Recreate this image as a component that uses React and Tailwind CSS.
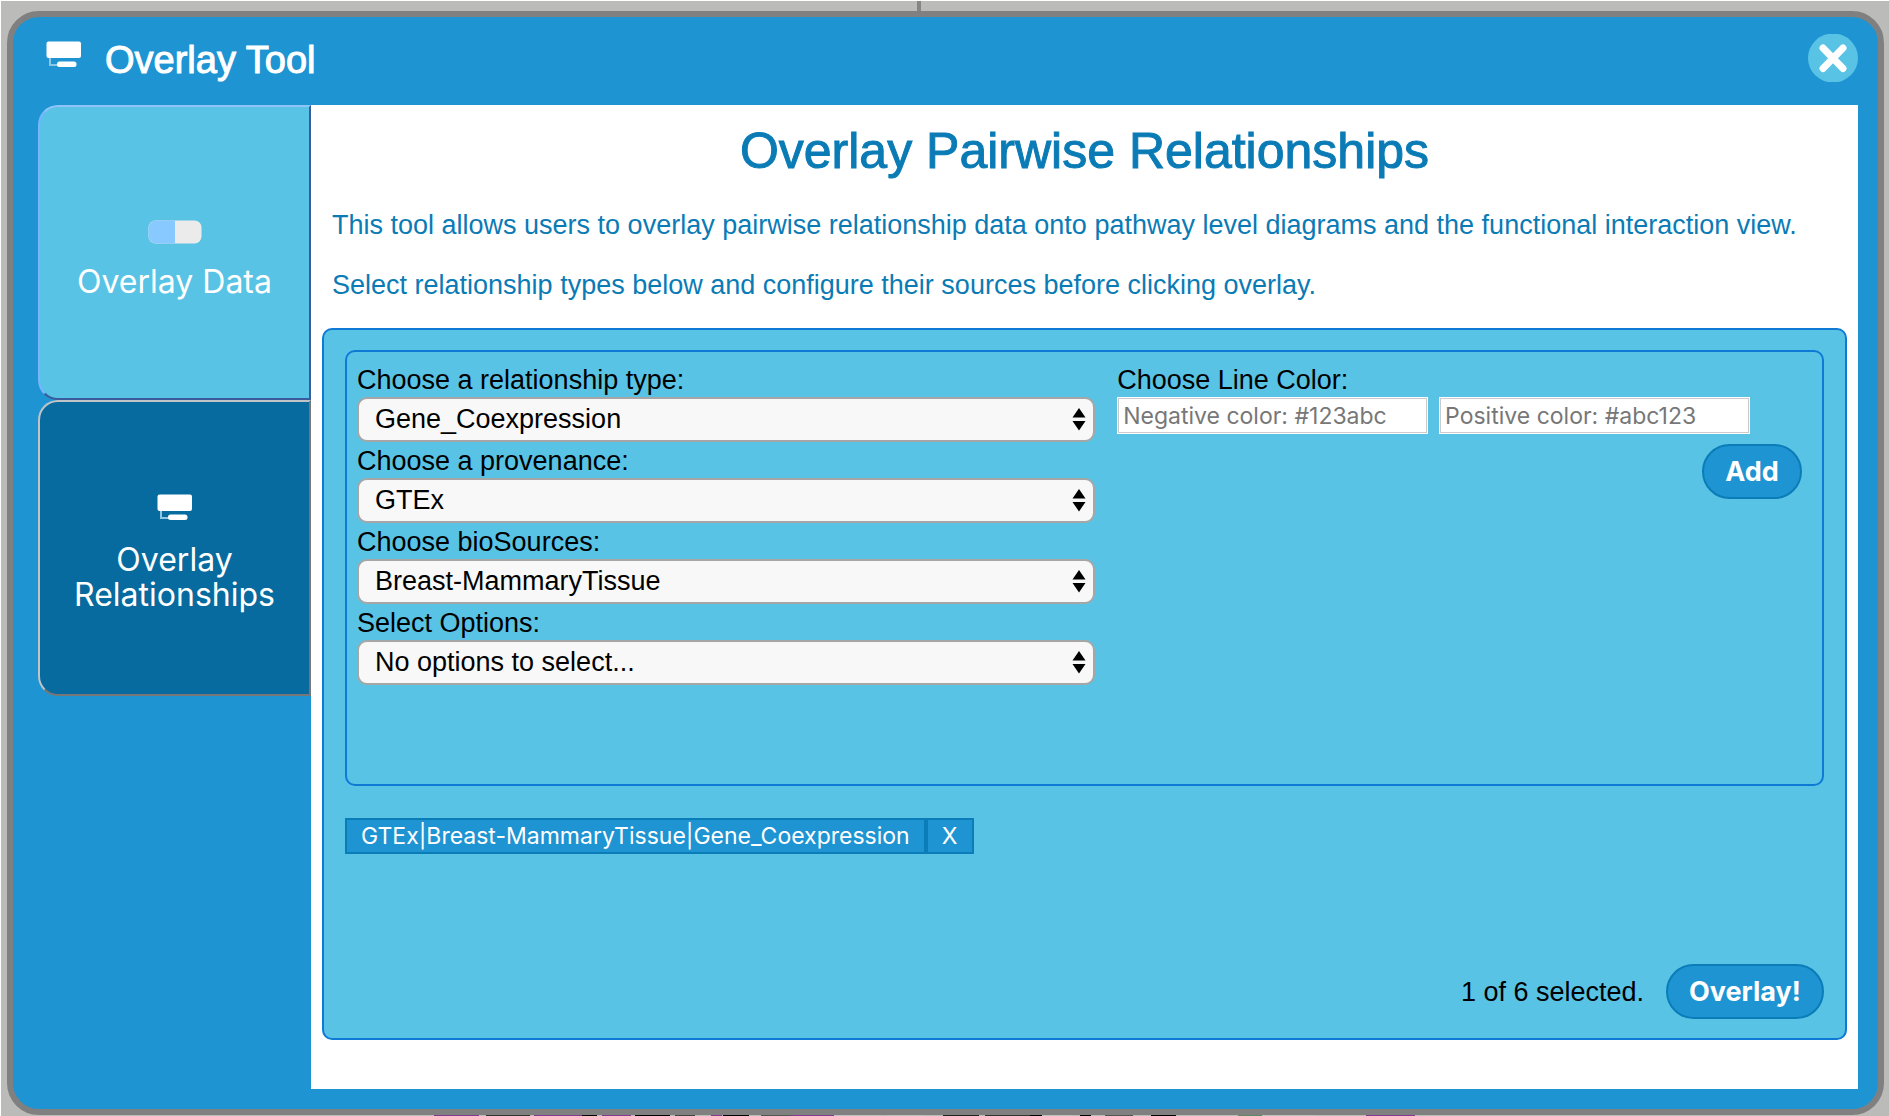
function CardIcon() {
  return (
    <svg className="h-7 w-9 shrink-0" viewBox="0 0 36 28" fill="none" aria-hidden="true">
      <path d="M4 17v7h8" stroke="#8fc6e4" strokeWidth="2" />
      <rect x="0.500" y="0.500" width="34.500" height="16.500" rx="2" fill="#fff" />
      <rect x="11" y="20.500" width="19.500" height="5.500" rx="2.500" fill="#fff" />
    </svg>
  );
}

function PillIcon() {
  return (
    <svg className="h-6 w-[54px]" viewBox="0 0 54 24" aria-hidden="true">
      <rect x="0.500" y="0.500" width="53" height="23" rx="7" fill="#ebebeb" />
      <path d="M27 0.500H8A7.500 7.500 0 0 0 0.500 8v8A7.500 7.500 0 0 0 8 23.500h19z" fill="#88caff" />
    </svg>
  );
}

function SelectField({ id, label, value }) {
  return (
    <div className="pb-px">
      <label htmlFor={id} className="block h-[35px] text-[27px] leading-9">{label}</label>
      <div className="relative">
        <select
          id={id}
          defaultValue={value}
          className="block h-[45px] w-full appearance-none rounded-[10px] border-2 border-[#a6a6a6] bg-[#f8f8f8] pb-0.5 pl-4 pr-12 text-[27px] leading-9 text-black"
        >
          <option>{value}</option>
        </select>
        <svg className="pointer-events-none absolute right-2 top-2.5 h-6 w-4" viewBox="0 0 16 24" aria-hidden="true">
          <path d="M8 1l6.500 9.500h-13zM8 23.500l6.500-9.500h-13z" fill="#000" />
        </svg>
      </div>
    </div>
  );
}

const fields = [
  ["type", "Choose a relationship type:", "Gene_Coexpression"],
  ["provenance", "Choose a provenance:", "GTEx"],
  ["sources", "Choose bioSources:", "Breast-MammaryTissue"],
  ["options", "Select Options:", "No options to select..."],
];

const inputClass =
  "h-[37px] min-w-0 flex-1 border-2 border-[#cbcbcb] bg-white px-1 font-[Inter,sans-serif] text-[23px] outline outline-1 -outline-offset-1 outline-white placeholder:text-[#777]";
const pillClass =
  "h-[55px] rounded-full border-2 border-[#0a7db8] bg-[#1f94d2] font-[Inter,sans-serif] text-[27px] font-bold leading-8 text-white";
const chipClass = "h-9 border-2 border-[#0a7db8] bg-[#1f94d2] leading-8";

// Slivers of the diagram that show below the dialog.
const slivers = [
  [433, 45, "#843a8e"], [485, 44, "#333"], [533, 48, "#843a8e"], [581, 15, "#000"],
  [601, 29, "#843a8e"], [634, 35, "#000"], [674, 20, "#444"], [710, 11, "#843a8e"],
  [722, 26, "#000"], [760, 30, "#555"], [790, 43, "#843a8e"], [833, 47, "#c0c0c0"],
  [886, 38, "#c0c0c0"], [942, 36, "#222"], [984, 45, "#333"], [1029, 12, "#000"],
  [1041, 31, "#c0c0c0"], [1079, 11, "#000"], [1104, 28, "#555"], [1150, 25, "#000"],
  [1237, 24, "#5e8a63"], [1261, 52, "#c0c0c0"], [1365, 49, "#843a8e"],
];

export default function App() {
  return (
    <div className="flex min-h-screen flex-col border-l border-t border-white bg-[#bbbbb9] font-['Liberation_Sans',Arial,sans-serif] text-black">
      <div className="ml-[916px] h-2.5 w-1 bg-[#858585]" />
      <main className="ml-1.5 mr-[5px] flex flex-1 flex-col rounded-[32px] border-[6px] border-[#808080] bg-[#1f94d2] px-5 pb-5">
        <header className="flex h-[88px] items-start justify-between pl-[13px]">
          <div className="flex pt-6">
            <CardIcon />
            <h1 className="pl-[23px] text-[38px] leading-[38px] text-white [-webkit-text-stroke:1px_white]">Overlay Tool</h1>
          </div>
          <button aria-label="Close" className="mt-[17px]">
            <svg className="h-12 w-[50px]" viewBox="0 0 50 48" aria-hidden="true">
              <ellipse cx="25" cy="24" rx="25" ry="24.500" fill="#58c3e5" />
              <path d="M15 14l20 20.500M35 14l-20 20.500" stroke="#fff" strokeWidth="7" strokeLinecap="round" />
            </svg>
          </button>
        </header>
        <div className="flex flex-1">
          <nav className="ml-[5px] flex w-[273px] shrink-0 flex-col font-[Inter,sans-serif] text-[32px] leading-[35px] text-white">
            <button className="flex h-[295px] flex-col items-center justify-center gap-5 rounded-l-[20px] border-2 border-b-[#3a5c9c] border-l-[#78b4ff] border-r-[#3a5c9c] border-t-[#8fc4fa] bg-[#58c3e5] pt-3.5">
              <PillIcon />
              Overlay Data
            </button>
            <button className="flex h-[296px] flex-col items-center justify-center gap-5 rounded-l-[20px] border-2 border-b-[#777] border-l-[#c0c4c6] border-r-[#777] border-t-[#c0c4c6] bg-[#076b9f] px-6 pt-2.5">
              <CardIcon />
              Overlay Relationships
            </button>
          </nav>
          <section className="flex min-w-0 flex-1 flex-col bg-white px-[11px] pb-[49px]">
            <h2 className="pt-4 text-center text-[50px] leading-[60px] text-[#0a7bb5] [-webkit-text-stroke:1px_#0a7bb5]">
              Overlay Pairwise Relationships
            </h2>
            <div className="space-y-7 px-2.5 pt-7 text-[27px] leading-8 text-[#0a7bb5]">
              <p>This tool allows users to overlay pairwise relationship data onto pathway level diagrams and the functional interaction view.</p>
              <p>Select relationship types below and configure their sources before clicking overlay.</p>
            </div>
            <div className="mt-[27px] flex flex-1 flex-col rounded-[10px] border-2 border-[#0f7ad5] bg-[#58c3e5] px-[21px] pb-[19px] pt-5">
              <form className="grid min-h-[436px] grid-cols-[minmax(0,17fr)_minmax(0,16fr)] gap-[22px] rounded-[10px] border-2 border-[#0f7ad5] px-2.5 pt-2.5">
                <div>
                  {fields.map(([id, label, value]) => (
                    <SelectField key={id} id={id} label={label} value={value} />
                  ))}
                </div>
                <fieldset className="min-w-0">
                  <legend className="h-[35px] text-[27px] leading-9">Choose Line Color:</legend>
                  <div className="flex gap-[11px] pr-[62px]">
                    <input className={inputClass} aria-label="Negative color" placeholder="Negative color: #123abc" />
                    <input className={inputClass} aria-label="Positive color" placeholder="Positive color: #abc123" />
                  </div>
                  <div className="flex justify-end pr-2.5 pt-2.5">
                    <button type="button" className={pillClass + " w-[100px]"}>Add</button>
                  </div>
                </fieldset>
              </form>
              <div className="flex pt-8 font-[Inter,sans-serif] text-[23px] text-white">
                <span className={chipClass + " px-3.5"}>GTEx|Breast-MammaryTissue|Gene_Coexpression</span>
                <button type="button" className={chipClass + " w-12"}>X</button>
              </div>
              <div className="mt-auto flex items-center justify-end gap-[22px]">
                <span className="text-[27px] leading-8">1 of 6 selected.</span>
                <button type="button" className={pillClass + " w-[158px]"}>Overlay!</button>
              </div>
            </div>
          </section>
        </div>
      </main>
      <svg className="h-px w-full" viewBox="0 0 1888 1" preserveAspectRatio="none" aria-hidden="true">
        {slivers.map(([x, w, fill]) => (
          <rect key={x} x={x} y="0" width={w} height="1" fill={fill} />
        ))}
      </svg>
    </div>
  );
}
